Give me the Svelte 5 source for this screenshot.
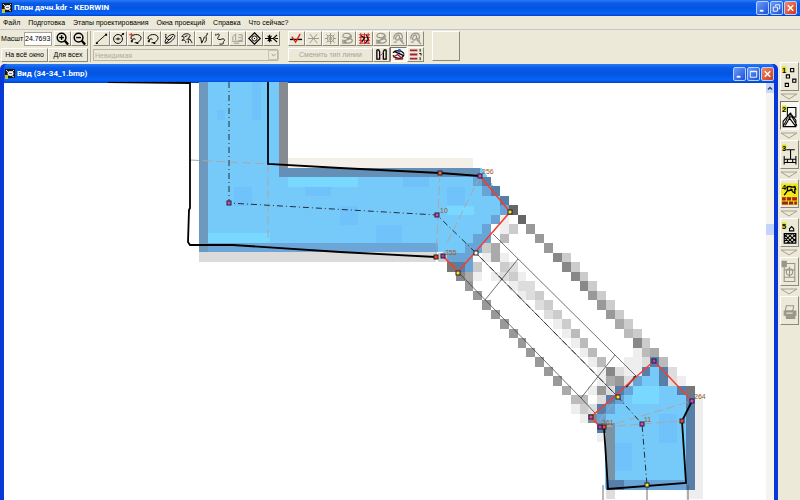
<script lang="ts">
  const menu = ['Файл', 'Подготовка', 'Этапы проектирования', 'Окна проекций', 'Справка', 'Что сейчас?'];

  const drawTools = ['line', 'circle', 'arcRed', 'arc', 'ellipse', 'lasso', 'spline', 'hook', 'caption', 'target', 'trim'];
  const editTools = ['check', 'cross', 'sun', 'loop', 'loopRed', 'loop2', 'cloud', 'cloud2'];
  const typeTools = ['brackets', 'eye', 'list'];
  const stages = ['points', 'plan', 'section', 'wall', 'hatch', 'sheet', 'printer'];
  const disabledTools = ['caption', 'cross', 'sun', 'loop', 'loop2', 'cloud', 'cloud2', 'sheet', 'printer'];

  /** Raster underlay: row, first column and one shade per cell. */
  const raster: [number, number, string][] = [
    [2, 31, 'yx'],
    [3, 32, 'yx'],
    [4, 34, 'x'],
    [5, 34, 'y6'],
    [6, 33, 'ye.6'],
    [7, 32, 'yfec.9'],
    [8, 31, 'yyfb'],
    [8, 38, '9'],
    [9, 30, 'yycaf'],
    [9, 39, '9'],
    [10, 27, 'cyyy.eae'],
    [10, 40, '8c'],
    [11, 28, '7xyc'],
    [11, 34, 'cd'],
    [11, 41, '8c'],
    [12, 29, '8ae'],
    [12, 33, 'edce'],
    [12, 42, '8c'],
    [13, 30, '9f'],
    [13, 35, 'edd'],
    [13, 43, '8c'],
    [14, 31, '9'],
    [14, 36, 'edc'],
    [14, 44, '9c'],
    [15, 32, '9'],
    [15, 38, 'dc'],
    [15, 45, '9c'],
    [16, 33, '9'],
    [16, 39, 'dc'],
    [16, 46, '9c'],
    [17, 34, '9'],
    [17, 40, 'ec'],
    [17, 47, 'ac'],
    [18, 35, '9'],
    [18, 41, 'eb'],
    [18, 48, 'bc'],
    [19, 36, '9'],
    [19, 42, 'eb'],
    [19, 49, '8c'],
    [20, 37, '9'],
    [20, 43, 'ebf'],
    [20, 48, 'feba'],
    [21, 38, '9'],
    [21, 44, 'eb'],
    [21, 48, 'eedxb'],
    [22, 39, '9'],
    [22, 45, 'e8deex.xd'],
    [23, 40, '9'],
    [23, 45, 'ea9dy..xde'],
    [24, 41, 'a'],
    [24, 44, 'e9dxy'],
    [24, 54, 'x7'],
    [25, 42, 'bb.dxy'],
    [25, 55, 'xe'],
    [26, 42, 'ecdxy'],
    [26, 55, 'xe'],
    [27, 43, 'e8y'],
    [27, 55, 'xe'],
    [28, 45, 'xz'],
    [28, 55, 'xe'],
    [29, 45, 'ez'],
    [29, 55, 'xe'],
    [30, 46, 'z'],
    [30, 55, 'xe'],
    [31, 46, 'z'],
    [31, 55, 'xe'],
    [32, 46, 'z'],
    [32, 55, 'xe'],
    [33, 46, 'z'],
    [33, 55, 'xe'],
    [34, 46, 'xxyyyyyyyxe'],
    [35, 46, 'd'],
    [35, 55, 'ee']
  ];

  const blues: Record<string, string> = { x: '#557fa8', y: '#68a4d6', z: '#7c93a3' };

  const cells = raster.flatMap(([row, start, levels]) =>
    [...levels]
      .map((level, i) => ({ row, col: start + i, level }))
      .filter((cell) => cell.level !== '.')
      .map(({ row, col, level }) => ({ row, col, fill: blues[level] ?? `#${level.repeat(3)}` }))
  );

  const nodes = [
    { x: 229, y: 203, color: '#e040d0' },
    { x: 437, y: 215, color: '#e040d0' },
    { x: 440, y: 173, color: '#f06040' },
    { x: 480, y: 176, color: '#e040d0' },
    { x: 510, y: 212, color: '#ffe030' },
    { x: 436, y: 257, color: '#f04040' },
    { x: 443, y: 256, color: '#c030c0' },
    { x: 458, y: 273, color: '#ffe030' },
    { x: 476, y: 253, color: '#ffffff' },
    { x: 618, y: 397, color: '#ffe030' },
    { x: 654, y: 361, color: '#b040d0' },
    { x: 692, y: 401, color: '#e040d0' },
    { x: 682, y: 421, color: '#f04040' },
    { x: 642, y: 424, color: '#e040d0' },
    { x: 591, y: 417, color: '#e040d0' },
    { x: 604, y: 427, color: '#f04040' },
    { x: 600, y: 427, color: '#c030c0' },
    { x: 647, y: 485, color: '#ffe030' }
  ];

  const labels = [
    { x: 482, y: 174, text: '256' },
    { x: 440, y: 213, text: '10' },
    { x: 445, y: 255, text: '255' },
    { x: 602, y: 425, text: '261' },
    { x: 644, y: 422, text: '11' },
    { x: 694, y: 399, text: '264' }
  ];

  let scale = $state('24.7693');
</script>

{#snippet appIcon()}
  <svg class="app-icon" viewBox="0 0 10 10" aria-hidden="true">
    <rect width="10" height="9" fill="#151515" />
    <path d="M0 6h3v4H0z" fill="#d8c020" />
    <path d="M1 1l2 2M9 1L7 3M9 8L7 7" stroke="#ddd" />
    <ellipse cx="5.5" cy="4.5" rx="3" ry="2.5" fill="#eee" />
    <path d="M4 4h3v1H4z" fill="#777" />
  </svg>
{/snippet}

{#snippet icon(name: string)}
  <svg class="icon" class:dim={disabledTools.includes(name)} viewBox="0 0 16 14" aria-hidden="true">
    {#if name === 'zoomIn' || name === 'zoomOut'}
      <circle cx="7" cy="6" r="4.7" stroke-width="1.6" />
      <path d="M10.500 9.500l3.500 4" stroke-width="2.5" />
      <path d="M4.500 6h5" stroke-width="1.500" />
      {#if name === 'zoomIn'}<path d="M7 3.500v5" stroke-width="1.500" />{/if}
    {:else if name === 'line'}
      <path d="M3 11.500L13 2.500" />
      <path d="M2 11h2v2H2zM12 2h2v2h-2z" fill="currentColor" stroke="none" />
    {:else if name === 'circle'}
      <circle cx="7.500" cy="7.500" r="4.800" />
      <path d="M5 7.500h5M10.500 4l3-2" />
      <path d="M7 6h1v3H7zM12 1h2v2h-2z" fill="currentColor" stroke="none" />
    {:else if name === 'arc' || name === 'arcRed'}
      <path d="M3 7c0-5 10-6 11-1 0 3-2 4-4 5.500H7M4 10l2-3 2 1M3 7l2 1" />
      <path d="M9 11h2v2H9zM3 9h2v2H3z" fill="currentColor" stroke="none" />
      {#if name === 'arcRed'}<path d="M1 3h5M3.500 1v5" stroke="#e02020" />{/if}
    {:else if name === 'ellipse'}
      <path d="M3.500 12C2 7 10 1 13 3s-4 10-9.500 9zM4 4c-1 4 3 5 6 3M4 12l8-8M3 3h2" />
    {:else if name === 'lasso'}
      <path d="M3 5c2-4 8-4 9-1l-2 3 3 2M3 5c3-1 3 3 0 4 3-1 5 1 4 3M6 5l3-1M8 8c3-1 5 1 6 4M10 9v3" />
    {:else if name === 'spline'}
      <path d="M3 6h2l1 6 2-4 1-3M12 3c-2 0-1 3-1 5s-1 3-2 3M12 1v2" />
    {:else if name === 'hook'}
      <path d="M4 3c3-2 3 0 2 2s-2 2 0 3 5-2 6 0-1 2-1 3 1 2-2 2H7M3 2v2" />
    {:else if name === 'caption'}
      <path d="M3 9V5l3-3v7M2 10h12M9 3h4v6H9M9 6h3M4 12h6" />
    {:else if name === 'target'}
      <path d="M8 .800L14.200 7 8 13.200 1.800 7z" stroke-width="1.200" />
      <circle cx="8" cy="7" r="2.800" />
      <path d="M7.500 6.500h1v1h-1z" fill="currentColor" stroke="none" />
    {:else if name === 'trim'}
      <path d="M1 7h9M4 4l4 6M8 4l-4 6M10 7l4-4M10 7l4 4M12 7h3M6 3v8" stroke-width="1.200" />
    {:else if name === 'check'}
      <path d="M1 8h13" stroke-width="1.500" />
      <path d="M3 5l4 6 5-9" stroke="#e02018" stroke-width="1.500" />
    {:else if name === 'cross'}
      <path d="M2 7h12M4 2l8 10M12 2L4 12" />
    {:else if name === 'sun'}
      <circle cx="8" cy="7" r="3.500" /><circle cx="8" cy="7" r="1.500" />
      <path d="M8 1v12M2 7h3M11 7h3M3.500 2.500l2 2M10.500 9.500l2 2M12.500 2.500l-2 2M5.500 9.500l-2 2" />
    {:else if name === 'loop' || name === 'loop2'}
      <path d="M3 4c1-4 8-3 9 0s-4 5-7 5 3 5 7 2-3-5-6-5-3-1-3-2M4 12l8-9M3 8v4h4" stroke-width="1.300" />
    {:else if name === 'loopRed'}
      <path d="M2 3h12M2 6h12M2 9h12M2 12h12M4 1v12M8 1v12M12 1v12" stroke="#e02020" />
      <path d="M4 4l4 2-3 5M10 3l2 5-3 4" stroke-width="1.200" />
    {:else if name === 'cloud' || name === 'cloud2'}
      <path d="M3 8c-1-7 8-9 9-4s-3 4-3 1-3-2-4 1 3 4 3 1M9 8l5 5M3 11h3M12 8v4" stroke-width="1.300" />
    {:else if name === 'brackets'}
      <path d="M3 2v10h3V4M13 2v10h-3V4M6 4l-1-2H3M10 4l1-2h2" stroke-width="1.400" />
      <path d="M6 9l4-4" stroke="#d030c0" />
    {:else if name === 'eye'}
      <path d="M2 5c3-3 9-3 12 1M2 8c4 5 10 4 12-1M4 4l9 4" stroke-width="1.400" />
      <path d="M2 10l5-3 6 5M4 12h8" stroke="#a02030" stroke-width="1.400" />
      <circle cx="9" cy="3" r="1.500" fill="#3060d0" stroke="#2050b0" />
    {:else if name === 'list'}
      <path d="M2 2.500h8M2 7h8M2 11.500h8" stroke="#a02038" stroke-width="2" />
      <path d="M13 1v3M12 6h2v2M13 10v3" />
    {/if}
  </svg>
{/snippet}

{#snippet stageIcon(name: string, number: number)}
  <svg class="stage-icon" class:dim={disabledTools.includes(name)} viewBox="0 0 16 24" aria-hidden="true">
    {#if name === 'wall'}
      <path d="M0 2h16v20H0z" fill="#f2e818" stroke="none" />
      <path d="M1 15h14v7H1z" fill="#a02018" stroke="none" />
      <path d="M1 18.500h14M5 15v3M10 15v3M7 19v3M12 19v3" stroke="#f2e818" />
      <path d="M5 6c3-3 5 1 8-1l1 3M6 5v4l5-1M9 7l3 4M13 7v5M6 9l-3 4" stroke-width="1.300" />
    {:else if number < 6}
      <path d="M1 2h4v6H1z" fill="#e6e020" stroke="none" />
    {/if}
    {#if name === 'points'}
      <path d="M9 4h3v3H9zM5 10h3v3H5zM11 14h3v3h-3zM4 18h3v3H4z" />
    {:else if name === 'plan'}
      <path d="M6 4h8v9H6zM9 9l-7 8v5h12v-6l-4-5M9 9l-1 5-4 7M9 9l2 5 4 7M2 22l4-8M8 14l6 8" />
    {:else if name === 'section'}
      <path d="M5 7h8M9 7v9M3 13v8M14 13v8M3 16h11M3 19h11M6 16v3M11 16v3" />
    {:else if name === 'hatch'}
      <path d="M3 12.500h11v9H3zM3 16l3-3M3 20l7-7M6 21l8-8M10 21l4-4M3 16l5 5M3 13l8 8M7 13l7 7M11 13l3 3M8 10V8l2-2 2 2v2z" />
    {:else if name === 'sheet'}
      <path d="M3 4h10v17H3zM3 10h10M8 7v10M3 17h10" />
      <circle cx="8" cy="12" r="3" />
      <path d="M1 2h4v5H1z" fill="currentColor" />
    {:else if name === 'printer'}
      <path d="M5 7h7l-1 5H4z" />
      <path d="M3 12h11v4H3zM5 17h8v2H5z" fill="currentColor" />
      <path d="M5 14h6" stroke="#eee" />
    {/if}
    {#if number < 6}
      <text class="number" x="1" y="8">{number}</text>
    {/if}
  </svg>
{/snippet}

{#snippet windowButtons(restored: boolean)}
  <div class="window-buttons">
    <button aria-label="Свернуть"><svg viewBox="0 0 12 12"><path d="M3 9h4" stroke-width="2" /></svg></button>
    <button aria-label="Развернуть">
      <svg viewBox="0 0 12 12">
        {#if restored}
          <path d="M5 4V2.500h4.500V7H8M2.500 5H7v4.500H2.500z" />
        {:else}
          <path d="M2.500 3h7v6.500h-7zM2.500 3.500h7" />
        {/if}
      </svg>
    </button>
    <button class="close" aria-label="Закрыть"><svg viewBox="0 0 12 12"><path d="M3 3l6 6M9 3L3 9" stroke-width="1.600" /></svg></button>
  </div>
{/snippet}

<div class="app">
  <header class="titlebar">
    {@render appIcon()}
    <h1>План дачн.kdr - KEDRWIN</h1>
    {@render windowButtons(true)}
  </header>

  <nav class="menu">
    {#each menu as item}
      <button>{item}</button>
    {/each}
  </nav>

  <div class="toolbar">
    <div class="group zoom-group">
      <div class="tools">
        <label for="scale">Масшт</label>
        <input id="scale" bind:value={scale} />
        <button class="tool" aria-label="Увеличить">{@render icon('zoomIn')}</button>
        <button class="tool" aria-label="Уменьшить">{@render icon('zoomOut')}</button>
      </div>
      <div class="tools">
        <button class="wide fit">На всё окно</button>
        <button class="wide all">Для всех</button>
      </div>
    </div>
    <div class="group draw-group">
      <div class="tools">
        {#each drawTools as name}
          <button class="tool" aria-label={name} disabled={disabledTools.includes(name)}>{@render icon(name)}</button>
        {/each}
      </div>
      <div class="combo">
        <select aria-label="Тип линии" disabled><option>Невидимая</option></select>
        <svg viewBox="0 0 9 9" aria-hidden="true"><path d="M2.500 3.500l2 2 2-2" /></svg>
      </div>
    </div>
    <div class="group edit-group">
      <div class="tools">
        {#each editTools as name}
          <button class="tool" aria-label={name} disabled={disabledTools.includes(name)}>{@render icon(name)}</button>
        {/each}
      </div>
      <div class="tools">
        <button class="wide change" disabled>Сменить тип линии</button>
        {#each typeTools as name}
          <button class="tool" class:pressed={name === 'eye'} aria-label={name}>{@render icon(name)}</button>
        {/each}
      </div>
    </div>
    <button class="preview" aria-label="Образец линии"></button>
  </div>

  <main>
    <section class="child">
      <header class="titlebar">
        {@render appIcon()}
        <h2>Вид (34-34_1.bmp)</h2>
        {@render windowButtons(false)}
      </header>
      <div class="client">
        <svg class="drawing" viewBox="4 82 762 418" preserveAspectRatio="xMinYMin slice" role="img" aria-label="План">
          <g shape-rendering="crispEdges">
            <rect x="279" y="158" width="194" height="10" fill="#f5efe9" />
            <rect x="199" y="252" width="237" height="10" fill="#dddbd9" />
            <rect x="199" y="82" width="9" height="170" fill="#6c99bd" />
            <rect x="279" y="82" width="9" height="95" fill="#858b91" />
            <g class="fill">
              <path d="M208 82h71v86h203l28 44-52 60-15-15v-5H208z" />
              <path d="M591 417l63-56 40 40v88h-89v-62h-5z" />
            </g>
            <rect x="279" y="168" width="201" height="9" fill="#6490b8" />
            <rect x="208" y="243" width="230" height="9" fill="#6ca5d8" />
            <path class="patch" d="M217 110h8v10h-8zM252 82h9v38h-9zM305 187h26v9h-26zM340 206h18v19h-18zM403 177h26v10h-26z" />
            <path class="patch" d="M234 187h18v19h-18zM376 225h26v18h-26zM447 187h18v18h-18zM614 443h18v28h-18zM659 414h18v29h-18z" />
            <path class="glow" d="M208 233h62v10h-62zM288 177h70v10h-70zM447 206h27v9h-27zM632 386h27v18h-27z" />
            <g transform="translate(199 158) scale(8.850 9.480)">
              {#each cells as cell}
                <rect x={cell.col} y={cell.row} width="1" height="1" fill={cell.fill} />
              {/each}
            </g>
          </g>

          <g class="guides">
            <path d="M190 160l78 4v81M440 173l-4 84M480 176l-33 67M604 427l88-26M604 427l78-6M600 420l18-23" />
          </g>
          <g class="thin">
            <path d="M493 234l122 121 21 21M458 272l123 126 14 15M476 253l142 144" />
            <path d="M518 259l-33 41M615 355l-34 43M603 485v15M647 485v15M688 485v15" />
          </g>
          <path class="axis" d="M229 82v121l208 12 39 38 142 144 24 27 5 61" />
          <g class="outline">
            <path d="M108 82l82 1v125l-1 2-1 32 2 3h43l107 7 96 5M268 82v82l72 4 100 5 40 3" />
            <path d="M692 401l-10 20 4 62-78 6-4-62M636 376l-10 11" />
          </g>
          <path class="cut" d="M480 176l30 36-52 60-15-16M600 427l-9-10 63-56 38 40" />

          {#each nodes as node}
            <rect x={node.x - 2} y={node.y - 2} width="4" height="4" fill={node.color} stroke="#222" />
          {/each}
          {#each labels as label}
            <text x={label.x} y={label.y}>{label.text}</text>
          {/each}
        </svg>
        <div class="scrollbar">
          <button class="scroll-up" aria-label="Вверх"><svg viewBox="0 0 8 8"><path d="M2 5l2-2 2 2" /></svg></button>
          <div class="thumb"></div>
        </div>
      </div>
    </section>

    <aside>
      {#each stages as name, i}
        <button class="stage" class:pressed={name === 'plan'} aria-label={name} disabled={disabledTools.includes(name)}>
          {@render stageIcon(name, i + 1)}
        </button>
        {#if i < stages.length - 1}
          <svg class="arrow" viewBox="0 0 18 10" aria-hidden="true"><path d="M1 3h16l-8 5z" /></svg>
        {/if}
      {/each}
    </aside>
  </main>
</div>

<style>
  :global(body) {
    margin: 0;
  }

  .app {
    display: flex;
    flex-direction: column;
    height: 100vh;
    overflow: hidden;
    background: #ece9d8;
    color: #000;
    font-family: 'Liberation Sans', Arial, sans-serif;
    font-size: 7px;
  }

  button,
  input,
  select {
    box-sizing: border-box;
    margin: 0;
    padding: 0;
    border: 0;
    border-radius: 0;
    color: inherit;
    font: inherit;
  }

  svg {
    display: block;
    fill: none;
    stroke: currentColor;
  }

  .titlebar {
    display: flex;
    align-items: center;
    flex: none;
    box-sizing: border-box;
    height: 16px;
    padding: 0 3px 0 2px;
    background: linear-gradient(#2a7af5, #0a5bea 20%, #0454e0 50%, #0664fa 85%, #0440c4);
    color: #fff;
  }

  .app-icon {
    width: 10px;
    height: 10px;
    stroke: none;
  }

  h1,
  h2 {
    flex: 1;
    margin: 0 0 0 2px;
    font-family: Roboto, 'Liberation Sans', sans-serif;
    font-size: 8px;
    font-weight: 700;
    line-height: 12px;
    white-space: nowrap;
  }

  .window-buttons {
    display: flex;
    gap: 1px;
  }

  .window-buttons button {
    width: 13px;
    height: 14px;
    border: 1px solid #b8d0ff;
    border-radius: 2px;
    background: linear-gradient(135deg, #6c9bf5, #1c50dc);
    color: #fff;
  }

  .window-buttons .close {
    background: linear-gradient(135deg, #f08868, #d03818);
  }

  .window-buttons svg {
    width: 11px;
    height: 12px;
  }

  .menu {
    display: flex;
    gap: 8px;
    flex: none;
    height: 13px;
    padding: 0 3px;
    border-bottom: 1px solid #c4c6cc;
  }

  .menu button {
    background: none;
    white-space: nowrap;
  }

  .toolbar {
    display: flex;
    flex: none;
    height: 31px;
    padding-top: 1px;
  }

  .group {
    display: flex;
    flex-direction: column;
    gap: 1px;
  }

  .tools {
    display: flex;
    align-items: center;
    height: 15px;
  }

  .zoom-group {
    padding: 0 2px 0 1px;
    border-right: 1px solid #b4b0a0;
  }

  .draw-group {
    margin-left: 2px;
  }

  .edit-group {
    margin-left: 8px;
  }

  label {
    width: 23px;
  }

  input {
    width: 28px;
    height: 14px;
    margin-right: 2px;
    border: 1px solid #a8a598;
    background: #fff;
    font-size: 7px;
  }

  .tool,
  .wide,
  .preview,
  .stage {
    border: 1px solid;
    border-color: #fff #8c897c #8c897c #fff;
    background: #ece9d8;
  }

  .tool {
    flex: none;
    width: 17px;
    height: 15px;
  }

  .pressed {
    border-color: #77756a #fff #fff #77756a;
    background: #f8f7f0;
  }

  .wide {
    height: 14px;
    white-space: nowrap;
  }

  .fit {
    width: 47px;
  }

  .all {
    width: 40px;
  }

  .change {
    width: 85px;
  }

  button:disabled {
    color: #a6a395;
  }

  .icon {
    width: 15px;
    height: 13px;
  }

  .dim {
    color: #98968a;
  }

  .combo {
    position: relative;
    display: flex;
    height: 12px;
    margin-top: 2px;
  }

  .combo select {
    width: 185px;
    padding-left: 1px;
    border: 1px solid #b8b5a5;
    background: #ece9d8;
    appearance: none;
    color: #b0ad9e;
    opacity: 1;
  }

  .combo svg {
    position: absolute;
    top: 1px;
    right: 1px;
    width: 9px;
    height: 8px;
    border: 1px solid #c8c5b5;
    color: #888;
    pointer-events: none;
  }

  .preview {
    width: 28px;
    height: 30px;
    margin-left: 8px;
  }

  main {
    display: flex;
    flex: 1;
    min-height: 0;
  }

  .child {
    display: flex;
    flex: 1;
    flex-direction: column;
    min-width: 0;
    margin-top: 2px;
    border: solid #0838d8;
    border-width: 0 4px;
    border-radius: 5px 5px 0 0;
    background: #0838d8;
  }

  .child .titlebar {
    height: 19px;
    padding-right: 0;
    padding-left: 1px;
    border-radius: 4px 4px 0 0;
  }

  .client {
    display: flex;
    flex: 1;
    min-height: 0;
    background: #fff;
  }

  .drawing {
    flex: 1;
    min-width: 0;
    margin-top: -1px;
    stroke: none;
  }

  .fill {
    fill: #76cafa;
  }

  .patch {
    fill: #70c2fa;
  }

  .glow {
    fill: #78d8ff;
  }

  .guides {
    stroke: #a8a8a8;
    stroke-dasharray: 9 4;
  }

  .thin {
    stroke: #333;
    stroke-width: 0.7;
  }

  .axis {
    stroke: #223038;
    stroke-dasharray: 6 3 1 3;
  }

  .outline {
    stroke: #000;
    stroke-width: 1.8;
  }

  .cut {
    stroke: #f83c30;
    stroke-width: 1.5;
  }

  text {
    fill: #9c5a28;
    font-size: 7px;
  }

  .number {
    fill: #000;
    stroke: none;
    font-weight: 700;
  }

  .scrollbar {
    display: flex;
    flex-direction: column;
    flex: none;
    width: 8px;
    background: #f5f4ee;
  }

  .scroll-up {
    height: 10px;
    background: #c8d8fc;
    color: #304878;
  }

  .scroll-up svg {
    width: 8px;
    height: 9px;
    stroke-width: 1.5;
  }

  .thumb {
    height: 11px;
    margin-top: 131px;
    border-radius: 1px;
    background: #c0d4fc;
  }

  aside {
    display: flex;
    flex: none;
    flex-direction: column;
    align-items: center;
    width: 22px;
  }

  .stage {
    flex: none;
    width: 19px;
    height: 29px;
  }

  .stage-icon {
    width: 17px;
    height: 26px;
  }

  .arrow {
    flex: none;
    width: 18px;
    height: 10px;
    color: #a5a295;
  }
</style>
